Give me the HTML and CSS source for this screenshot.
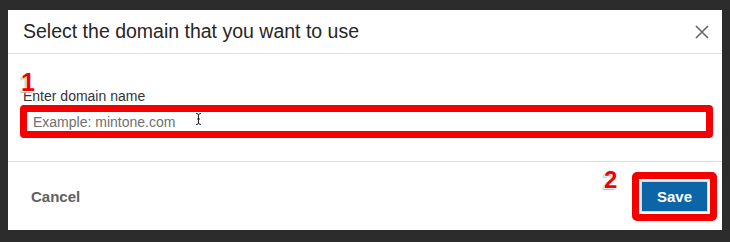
FILE: index.html
```html
<!DOCTYPE html>
<html lang="en">
<head>
  <meta charset="UTF-8" />
  <meta name="viewport" content="width=device-width, initial-scale=1.0"/>
  <title>Select domain</title>
  <link rel="stylesheet" href="styles.css">
</head>
<body>

  <div class="modal">
    <div class="modal-header">
      <h2>Select the domain that you want to use</h2>
      <button class="close-btn" aria-label="Close">
        <svg width="14" height="14" viewBox="0 0 14 14">
          <path d="M1 1 L13 13 M13 1 L1 13" stroke="#666" stroke-width="1.6" fill="none"/>
        </svg>
      </button>
    </div>

    <div class="modal-body">
      <span class="step step-one">1</span>
      <label class="field-label" for="domainName">Enter domain name</label>
      <div class="highlight input-frame">
        <input id="domainName" type="text" placeholder="Example: mintone.com" />
      </div>
      <svg class="ibeam" width="7" height="12" viewBox="0 0 7 12">
        <path d="M1 0.5 Q3.5 0.5 3.5 2 L3.5 10 Q3.5 11.5 1 11.5 M6 0.5 Q3.5 0.5 3.5 2 M3.5 10 Q3.5 11.5 6 11.5 M2 6 L5 6" stroke="#222" stroke-width="1" fill="none"/>
      </svg>
    </div>

    <div class="modal-footer">
      <button class="cancel-btn">Cancel</button>
      <div class="save-wrap">
        <span class="step step-two">2</span>
        <div class="highlight save-frame">
          <button class="save-btn">Save</button>
        </div>
      </div>
    </div>
  </div>

</body>
</html>
```

FILE: styles.css
```css
body {
  font-family: "Liberation Sans", Arial, sans-serif;
  background-color: #2c2c2c;
  margin: 0;
  padding: 10px 8px 0 8px;
}

.modal {
  width: 714px;
  height: 220px;
  background: #ffffff;
  display: flex;
  flex-direction: column;
}

.modal-header {
  height: 43px;
  display: flex;
  align-items: center;
  justify-content: space-between;
  padding: 0 13px 0 15px;
  border-bottom: 1px solid #dedede;
}

.modal-header h2 {
  margin: 0;
  font-size: 19.5px;
  font-weight: normal;
  color: #262626;
}

.close-btn {
  background: none;
  border: none;
  padding: 0;
  width: 14px;
  height: 14px;
  display: flex;
  cursor: pointer;
}

.modal-body {
  position: relative;
  padding: 33px 9px 23px 12px;
}

.field-label {
  display: block;
  margin-left: 3px;
  font-size: 14px;
  line-height: 18px;
  color: #333;
}

.highlight {
  border: 7px solid #f40000;
  border-radius: 4px;
}

.input-frame {
  height: 19px;
  background: #fff;
}

.input-frame input {
  width: 100%;
  height: 19px;
  box-sizing: border-box;
  border: none;
  padding: 0 0 0 6px;
  font-family: "Liberation Sans", Arial, sans-serif;
  font-size: 14px;
  color: #333;
  outline: none;
}

.input-frame input::placeholder {
  color: #707070;
}

.step {
  position: absolute;
  font-weight: bold;
  color: #f20000;
  text-shadow: -1px 1px 0 #fff, -2px 2px 1px #bbb;
}

.step-one {
  left: 13px;
  top: 16px;
  font-size: 25px;
  line-height: 25px;
}

.ibeam {
  position: absolute;
  left: 187px;
  top: 59px;
}

.modal-footer {
  flex: 1;
  display: flex;
  align-items: center;
  justify-content: space-between;
  padding: 0 5px 0 23px;
  border-top: 1px solid #dedede;
}

.cancel-btn {
  background: none;
  border: none;
  padding: 0;
  font-family: "Liberation Sans", Arial, sans-serif;
  font-size: 15px;
  font-weight: bold;
  color: #606060;
  cursor: pointer;
}

.save-wrap {
  position: relative;
}

.save-frame {
  border-radius: 5px;
  padding: 2px;
  background: #fff;
}

.save-btn {
  display: block;
  width: 67px;
  height: 31px;
  background: #0b65a6;
  border: 1px solid #d0dbe6;
  color: #fff;
  font-family: "Liberation Sans", Arial, sans-serif;
  font-size: 15px;
  font-weight: bold;
  cursor: pointer;
}

.step-two {
  left: -28px;
  top: -4px;
  font-size: 24px;
  line-height: 24px;
}
```
